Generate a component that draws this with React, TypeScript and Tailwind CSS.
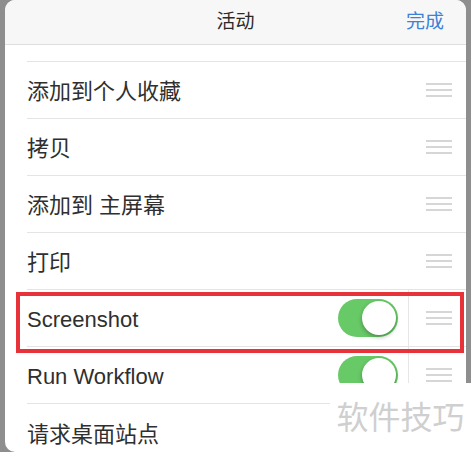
import type { ReactNode } from 'react'

const font = { fontFamily: '"Liberation Sans", "Noto Sans CJK SC", sans-serif' }

function Handle() {
  return (
    <div className="flex w-[26px] flex-col gap-[4px]">
      <span className="h-[2px] bg-[#d6d6d6]" />
      <span className="h-[2px] bg-[#d6d6d6]" />
      <span className="h-[2px] bg-[#d6d6d6]" />
    </div>
  )
}

function Toggle() {
  return (
    <div className="flex h-[38px] w-[60px] items-center justify-end rounded-full bg-[#68c967] p-[2px]">
      <span className="h-[34px] w-[34px] rounded-full bg-white shadow-[0_2px_4px_rgba(0,0,0,0.3)]" />
    </div>
  )
}

function Row({ label, toggle, last }: { label: ReactNode; toggle?: boolean; last?: boolean }) {
  return (
    <div className="flex h-[57px] pl-[22px]">
      <div className={`flex flex-1 items-center ${last ? '' : 'border-b border-[#e4e4e4]'}`}>
        <span className="flex-1 pt-[3px] text-[22px] text-[#2f2f2f]">{label}</span>
        {toggle && (
          <div className="flex h-full items-center border-r border-[#e6e6e6] pr-[10px]">
            <Toggle />
          </div>
        )}
        <div className={`flex h-full items-center ${toggle ? 'pl-[17px]' : 'pl-[0px]'} pr-[14px]`}>
          <Handle />
        </div>
      </div>
    </div>
  )
}

export default function App() {
  return (
    <div className="relative h-[452px] w-[471px] overflow-hidden bg-[#8e8e8e] pl-[5px] pr-[5px]" style={font}>
      <div className="h-[452px] overflow-hidden rounded-[10px] bg-white">
        <div className="grid h-[45px] grid-cols-[1fr_auto_1fr] items-center border-b border-[#dedede] bg-[#f7f7f7] px-[22px]">
          <span />
          <span className="text-[19px] text-[#2a2a2a]">活动</span>
          <span className="text-right text-[19px] text-[#3b82d8]">完成</span>
        </div>
        <div className="pt-[16px]">
          <div className="ml-[22px] border-t border-[#e4e4e4]" />
          <Row label="添加到个人收藏" />
          <Row label="拷贝" />
          <Row label="添加到 主屏幕" />
          <Row label="打印" />
          <Row label="Screenshot" toggle />
          <Row label="Run Workflow" toggle />
          <Row label="请求桌面站点" last />
        </div>
      </div>
      <div className="absolute left-[16px] top-[292px] h-[61px] w-[448px] border-[4px] border-[#e8323a]" />
      <div className="absolute left-[330px] top-[383px] flex h-[69px] w-[141px] items-center justify-center bg-white">
        <span className="whitespace-nowrap text-[32px] text-[#cfcfcf]">软件技巧</span>
      </div>
    </div>
  )
}
